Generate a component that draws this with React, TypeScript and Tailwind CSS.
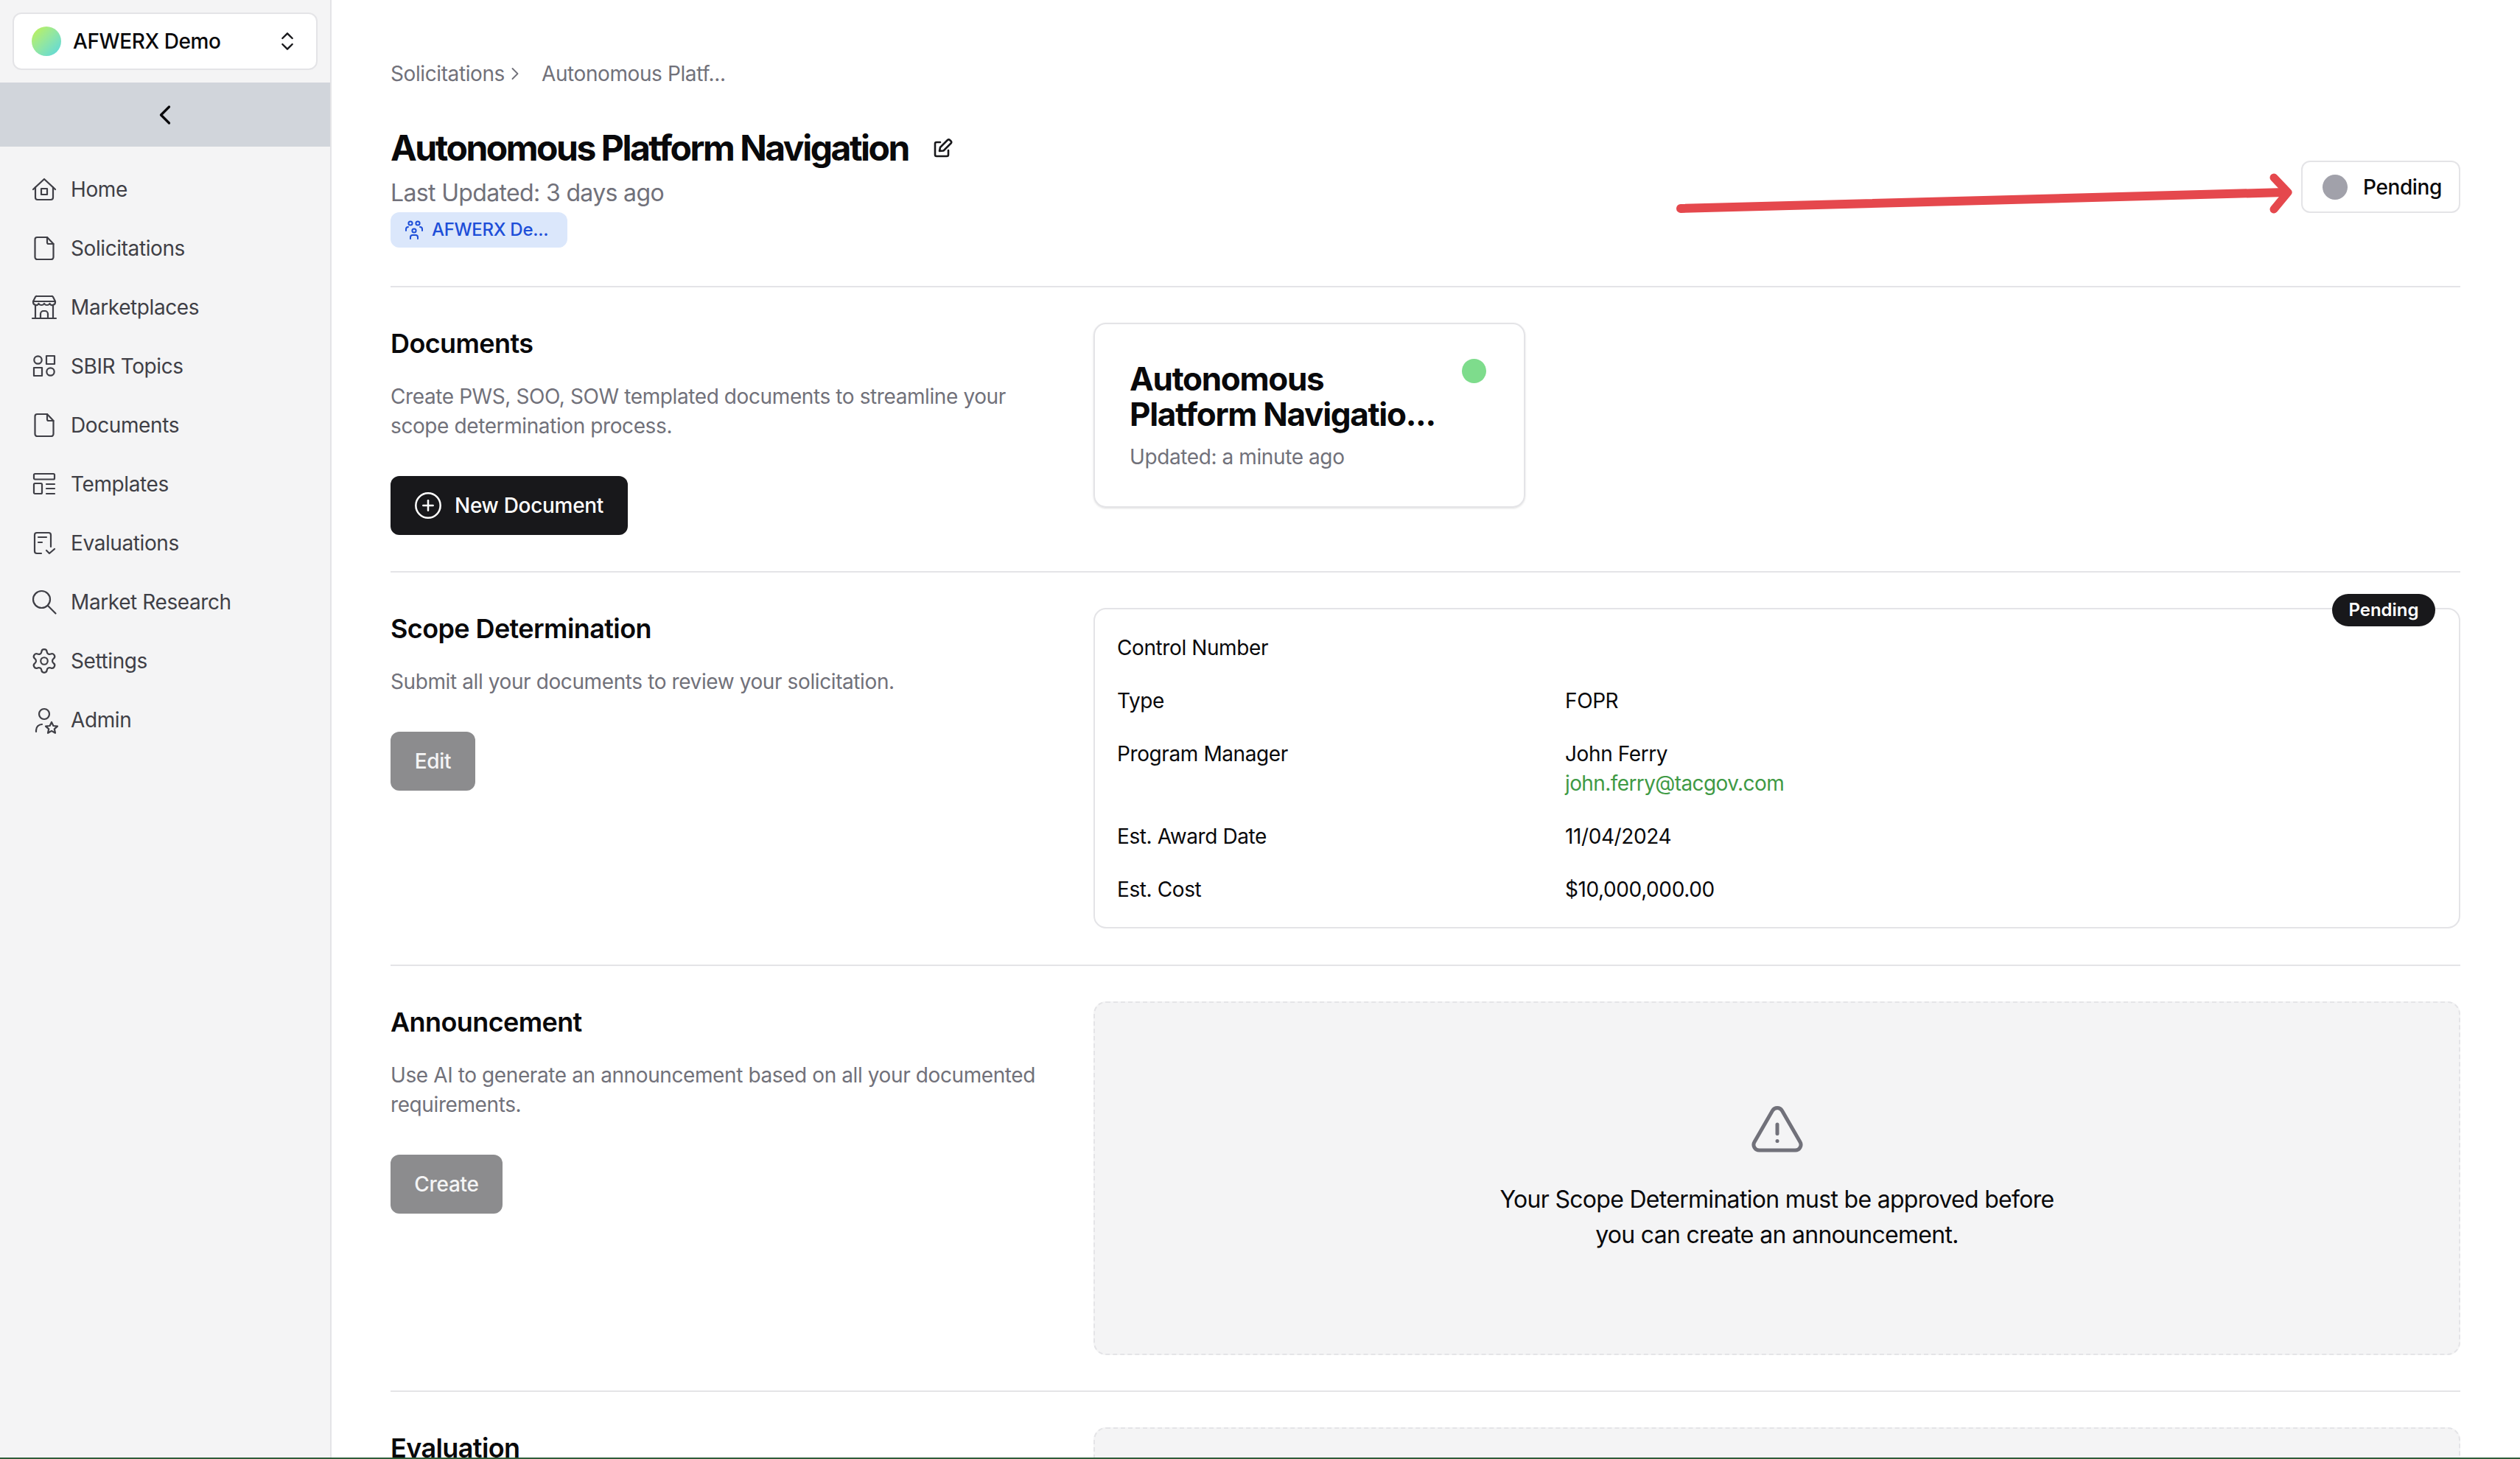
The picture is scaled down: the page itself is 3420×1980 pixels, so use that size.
import { ChevronLeft, ChevronRight, ChevronsUpDown, CirclePlus, Settings } from "lucide-react";
import type { ReactNode } from "react";

function Icon({ children }: { children: ReactNode }) {
  return (
    <svg
      viewBox="0 0 32 32"
      className="w-[32px] h-[32px] overflow-visible"
      fill="none"
      stroke="currentColor"
      strokeWidth="2.2"
      strokeLinecap="round"
      strokeLinejoin="round"
    >
      {children}
    </svg>
  );
}

function FileIcon() {
  return (
    <Icon>
      <path d="M3.5 4a3 3 0 0 1 3-3H20l8.5 9v18a3 3 0 0 1-3 3h-19a3 3 0 0 1-3-3Z" />
      <path d="M20 1v7a2 2 0 0 0 2 2h6.5" />
    </Icon>
  );
}

const nav: { label: string; icon: ReactNode }[] = [
  {
    label: "Home",
    icon: (
      <Icon>
        <path d="M1 16 16 2l15 14" />
        <path d="M4 13v14a3 3 0 0 0 3 3h18a3 3 0 0 0 3-3V13" />
        <rect x="12" y="15" width="8" height="8" />
      </Icon>
    ),
  },
  { label: "Solicitations", icon: <FileIcon /> },
  {
    label: "Marketplaces",
    icon: (
      <Icon>
        <path d="M6 1h20a2 2 0 0 1 2 1l3 6v1a4 4 0 0 1-7.5 2 4.5 4.5 0 0 1-7.5 0 4.5 4.5 0 0 1-7.5 0A4 4 0 0 1 1 9V8l3-6a2 2 0 0 1 2-1Z" />
        <path d="M1 8h30M4 14v17M28 14v17M0 31h32" />
        <path d="M11 31v-6a4 4 0 0 1 4-4h2a4 4 0 0 1 4 4v6" />
      </Icon>
    ),
  },
  {
    label: "SBIR Topics",
    icon: (
      <Icon>
        <circle cx="7.5" cy="7.5" r="5.2" />
        <rect x="19" y="2" width="11" height="11" />
        <rect x="2" y="18" width="11" height="11" />
        <circle cx="24.5" cy="23.5" r="5.2" />
      </Icon>
    ),
  },
  { label: "Documents", icon: <FileIcon /> },
  {
    label: "Templates",
    icon: (
      <Icon>
        <rect x="2" y="2" width="28" height="7.5" rx="1.5" />
        <rect x="2" y="15" width="11" height="14" rx="1.5" />
        <path d="M19 16h11M19 22h11M19 29h11" />
      </Icon>
    ),
  },
  {
    label: "Evaluations",
    icon: (
      <Icon>
        <path d="M12 30H6a3 3 0 0 1-3-3V5a3 3 0 0 1 3-3h16a3 3 0 0 1 3 3v16" />
        <path d="M8 8h11M8 15h5" />
        <path d="m19 26 4 4 7-6" />
      </Icon>
    ),
  },
  {
    label: "Market Research",
    icon: (
      <Icon>
        <circle cx="12.5" cy="12.5" r="11.5" />
        <path d="m21 21 10.5 10.5" />
      </Icon>
    ),
  },
  { label: "Settings", icon: <Settings className="w-[38px] h-[38px] shrink-0" strokeWidth={1.4} /> },
  {
    label: "Admin",
    icon: (
      <Icon>
        <circle cx="16" cy="8" r="7" />
        <path d="M5 32v-2a8 8 0 0 1 8-8" />
        <path d="m26 19 2.4 5 5.6.6-4.2 3.7 1.2 5.5-5-2.9-5 2.9 1.2-5.5-4.2-3.7 5.6-.6Z" />
      </Icon>
    ),
  },
];

function Sidebar() {
  return (
    <aside className="w-[450px] shrink-0 h-full bg-[#f4f4f5] border-r-2 border-[#e4e4e7] flex flex-col">
      <div className="p-[17px]">
        <div className="h-[78px] bg-white border-2 border-[#e4e4e7] rounded-[12px] flex items-center pl-[24px] pr-[23px]">
          <div className="w-[40px] h-[40px] rounded-full bg-gradient-to-br from-[#c2f23f] to-[#55d6e0]" />
          <span className="ml-[16px] text-[28px] tracking-[-0.4px] font-medium text-[#09090b]">AFWERX Demo</span>
          <ChevronsUpDown className="ml-auto w-[32px] h-[32px] text-[#18181b]" strokeWidth={1.8} />
        </div>
      </div>
      <div className="h-[87px] bg-[#d1d5db] flex items-center justify-center">
        <ChevronLeft className="w-[44px] h-[44px] text-[#09090b]" strokeWidth={1.8} />
      </div>
      <nav className="flex flex-col pt-[18px]">
        {nav.map((item) => (
          <div key={item.label} className="h-[80px] flex items-center pl-[44px] text-[#3f3f46]">
            <div className="w-[32px] flex justify-center shrink-0">{item.icon}</div>
            <span className="ml-[20px] text-[28px] tracking-[-0.4px]">{item.label}</span>
          </div>
        ))}
      </nav>
    </aside>
  );
}

function Section({
  title,
  text,
  button,
  children,
  className,
}: {
  title: string;
  text?: string;
  button?: ReactNode;
  children: ReactNode;
  className: string;
}) {
  return (
    <section className={`flex border-t-2 border-[#e4e4e7] pt-[48px] ${className}`}>
      <div className="w-[954px] shrink-0">
        <h2 className="text-[36px] leading-[56px] font-semibold tracking-[-0.6px] text-[#09090b]">{title}</h2>
        {text && <p className="mt-[24px] w-[900px] text-[28px] leading-[40px] tracking-[-0.4px] text-[#71717a]">{text}</p>}
        {button && <div className="mt-[48px]">{button}</div>}
      </div>
      <div className="flex-1 min-w-0">{children}</div>
    </section>
  );
}

const disabledBtn =
  "h-[80px] rounded-[12px] bg-[#8c8c8e] text-[#f4f4f5] text-[28px] tracking-[-0.3px] font-medium flex items-center justify-center";

function Row({ label, children }: { label: string; children?: ReactNode }) {
  return (
    <div className="flex text-[28px] leading-[40px] tracking-[-0.4px] text-[#09090b]">
      <div className="w-[608px] shrink-0">{label}</div>
      <div>{children}</div>
    </div>
  );
}

export default function App() {
  return (
    <div className="relative w-[3420px] h-[1980px] overflow-hidden bg-white flex font-['Inter',sans-serif]">
      <Sidebar />
      <main className="flex-1 min-w-0 pl-[80px] pr-[81px]">
        <div className="h-[388px] flex flex-col pt-[80px]">
          <div className="flex items-center h-[40px] text-[28px] tracking-[-0.4px] text-[#71717a]">
            <span>Solicitations</span>
            <ChevronRight className="w-[28px] h-[28px]" strokeWidth={1.6} />
            <span className="ml-[22px]">Autonomous Platf...</span>
          </div>
          <div className="flex justify-between">
            <div>
              <div className="flex items-center mt-[49px]">
                <h1 className="text-[48px] leading-[64px] font-bold tracking-[-2.47px] text-[#09090b]">
                  Autonomous Platform Navigation
                </h1>
                <svg
                  viewBox="0 0 28 28"
                  className="ml-[33px] w-[28px] h-[28px] text-[#18181b]"
                  fill="none"
                  stroke="currentColor"
                  strokeWidth="2.6"
                  strokeLinecap="round"
                  strokeLinejoin="round"
                >
                  <path d="M10 6H5a2 2 0 0 0-2 2v15a2 2 0 0 0 2 2h14a2 2 0 0 0 2-2v-6" />
                  <path d="M9 18l1-5L20 3a2.2 2.2 0 0 1 3 0l1.5 1.5a2.2 2.2 0 0 1 0 3L14.5 17.5Z" />
                </svg>
              </div>
              <div className="text-[32px] leading-[48px] tracking-[-0.65px] text-[#71717a] mt-[5px]">
                Last Updated: 3 days ago
              </div>
              <div className="mt-[2px] w-[240px] h-[48px] rounded-[12px] bg-[#dbe7fb] text-[#1d4ed8] flex items-center pl-[18px]">
                <svg
                  viewBox="0 0 28 28"
                  className="w-[28px] h-[28px]"
                  fill="none"
                  stroke="currentColor"
                  strokeWidth="2"
                  strokeLinecap="round"
                >
                  <circle cx="9" cy="5" r="2.6" />
                  <circle cx="19" cy="5" r="2.6" />
                  <circle cx="14" cy="15" r="2.6" />
                  <path d="M3 15v-2a3 3 0 0 1 3-3M25 15v-2a3 3 0 0 0-3-3M9 26v-2a3 3 0 0 1 3-3h4a3 3 0 0 1 3 3v2" />
                </svg>
                <span className="ml-[10px] text-[24px] tracking-[-0.3px] font-medium">AFWERX De...</span>
              </div>
            </div>
            <div className="mt-[98px] h-[71px] w-[216px] border-2 border-[#e4e4e7] rounded-[12px] flex items-center pl-[27px]">
              <div className="w-[34px] h-[34px] rounded-full bg-[#a1a1aa]" />
              <span className="ml-[21px] text-[28px] tracking-[-0.4px] font-medium text-[#09090b]">Pending</span>
            </div>
          </div>
        </div>

        <Section
          className="pb-[49px]"
          title="Documents"
          text="Create PWS, SOO, SOW templated documents to streamline your scope determination process."
          button={
            <button className="h-[80px] w-[322px] rounded-[12px] bg-[#18181b] text-white text-[28px] tracking-[-0.3px] font-medium flex items-center pl-[31px] gap-[16px]">
              <CirclePlus className="w-[40px] h-[40px]" strokeWidth={1.5} />
              New Document
            </button>
          }
        >
          <div className="relative w-[586px] h-[251px] border-2 border-[#e4e4e7] rounded-[17px] shadow-sm pt-[50px] pl-[47px]">
            <div className="w-[440px] text-[44px] leading-[48px] font-bold tracking-[-1.3px] text-[#09090b]">
              Autonomous
              <br />
              Platform Navigatio...
            </div>
            <div className="mt-[14px] text-[28px] leading-[40px] tracking-[-0.4px] text-[#71717a]">Updated: a minute ago</div>
            <div className="absolute right-[51px] top-[47px] w-[33px] h-[33px] rounded-full bg-[#7edc8c]" />
          </div>
        </Section>

        <Section
          className="pb-[49px]"
          title="Scope Determination"
          text="Submit all your documents to review your solicitation."
          button={<button className={`${disabledBtn} w-[115px]`}>Edit</button>}
        >
          <div className="relative h-[435px] border-2 border-[#e4e4e7] rounded-[17px] px-[30px] pt-[32px] flex flex-col gap-[32px]">
            <div className="absolute right-[32px] -top-[21px] h-[44px] w-[140px] rounded-full bg-[#18181b] text-white text-[24px] font-semibold flex items-center justify-center">
              Pending
            </div>
            <Row label="Control Number" />
            <Row label="Type">FOPR</Row>
            <Row label="Program Manager">
              <div>John Ferry</div>
              <div className="text-[#3f9a45] tracking-[-0.6px]">john.ferry@tacgov.com</div>
            </Row>
            <Row label="Est. Award Date">11/04/2024</Row>
            <Row label="Est. Cost">$10,000,000.00</Row>
          </div>
        </Section>

        <Section
          className="pb-[48px]"
          title="Announcement"
          text="Use AI to generate an announcement based on all your documented requirements."
          button={<button className={`${disabledBtn} w-[152px]`}>Create</button>}
        >
          <div className="h-[480px] bg-[#f4f4f5] border-2 border-dashed border-[#e4e4e7] rounded-[17px] flex flex-col items-center justify-center pb-[2px]">
            <svg
              viewBox="0 0 24 24"
              className="w-[80px] h-[80px] text-[#71717a]"
              fill="none"
              stroke="currentColor"
              strokeWidth="1.5"
              strokeLinecap="round"
              strokeLinejoin="round"
            >
              <path d="M12 9v3.75m-9.303 3.376c-.866 1.5.217 3.374 1.948 3.374h14.71c1.73 0 2.813-1.874 1.948-3.374L13.949 3.378c-.866-1.5-3.032-1.5-3.898 0L2.697 16.126ZM12 15.75h.007v.008H12v-.008Z" />
            </svg>
            <p className="mt-[28px] text-center text-[32px] leading-[48px] tracking-[-0.7px] text-[#09090b]">
              Your Scope Determination must be approved before
              <br />
              you can create an announcement.
            </p>
          </div>
        </Section>

        <Section className="pb-[48px]" title="Evaluation">
          <div className="h-[480px] bg-[#f4f4f5] border-2 border-dashed border-[#e4e4e7] rounded-[17px]" />
        </Section>
      </main>

      {/* annotation arrow drawn over the page */}
      <svg
        className="absolute left-0 top-0 w-[3420px] h-[1980px] pointer-events-none"
        viewBox="0 0 3420 1980"
        fill="none"
        stroke="#e5484d"
        strokeLinecap="round"
        strokeLinejoin="round"
      >
        <path d="M2281 283 3100 261" strokeWidth="12" />
        <path d="M3086 241 3105 261 3086 284" strokeWidth="11" />
      </svg>

      {/* thin dark strip along the bottom of the capture */}
      <div className="absolute left-0 right-0 bottom-0 h-[2px] bg-[#2f5d3a]" />
    </div>
  );
}
